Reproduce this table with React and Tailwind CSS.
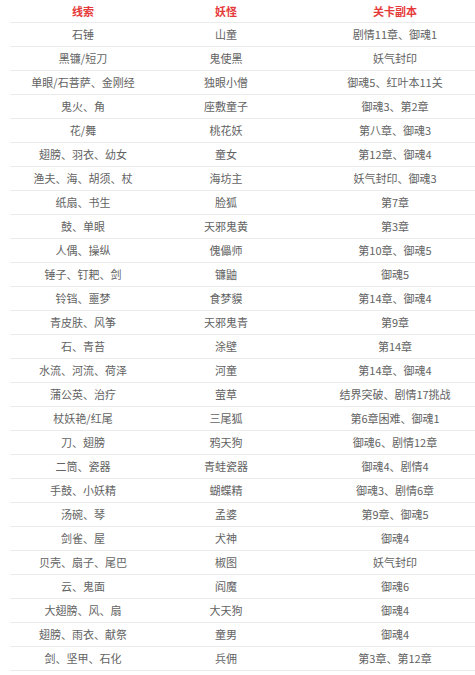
import React from "react";

const rows = [
  ["石锤", "山童", "剧情11章、御魂1"],
  ["黑镰/短刀", "鬼使黑", "妖气封印"],
  ["单眼/石菩萨、金刚经", "独眼小僧", "御魂5、红叶本11关"],
  ["鬼火、角", "座敷童子", "御魂3、第2章"],
  ["花/舞", "桃花妖", "第八章、御魂3"],
  ["翅膀、羽衣、幼女", "童女", "第12章、御魂4"],
  ["渔夫、海、胡须、杖", "海坊主", "妖气封印、御魂3"],
  ["纸扇、书生", "脸狐", "第7章"],
  ["鼓、单眼", "天邪鬼黄", "第3章"],
  ["人偶、操纵", "傀儡师", "第10章、御魂5"],
  ["锤子、钉耙、剑", "镰鼬", "御魂5"],
  ["铃铛、噩梦", "食梦貘", "第14章、御魂4"],
  ["青皮肤、风筝", "天邪鬼青", "第9章"],
  ["石、青苔", "涂壁", "第14章"],
  ["水流、河流、荷泽", "河童", "第14章、御魂4"],
  ["蒲公英、治疗", "萤草", "结界突破、剧情17挑战"],
  ["杖妖艳/红尾", "三尾狐", "第6章困难、御魂1"],
  ["刀、翅膀", "鸦天狗", "御魂6、剧情12章"],
  ["二筒、瓷器", "青蛙瓷器", "御魂4、剧情4"],
  ["手鼓、小妖精", "蝴蝶精", "御魂3、剧情6章"],
  ["汤碗、琴", "孟婆", "第9章、御魂5"],
  ["剑雀、屋", "犬神", "御魂4"],
  ["贝壳、扇子、尾巴", "椒图", "妖气封印"],
  ["云、鬼面", "阎魔", "御魂6"],
  ["大翅膀、风、扇", "大天狗", "御魂4"],
  ["翅膀、雨衣、献祭", "童男", "御魂4"],
  ["剑、坚甲、石化", "兵佣", "第3章、第12章"],
];

export default function App() {
  return (
    <div
      className="w-[475px] h-[675px] overflow-hidden bg-white pl-[10px]"
      style={{ fontFamily: '"Noto Sans CJK SC", "Noto Sans", sans-serif' }}
    >
      <div className="w-[484px] text-[11px] leading-none">
        <div className="grid grid-cols-[146px_140px_198px] h-[23px] border-b border-[#ebebeb] items-center font-semibold text-[#e53a3a]">
          <div className="text-center">线索</div>
          <div className="text-center">妖怪</div>
          <div className="text-center">关卡副本</div>
        </div>
        {rows.map((r, i) => (
          <div
            key={i}
            className="grid grid-cols-[146px_140px_198px] h-[24px] border-b border-[#ebebeb] items-center text-[#636363]"
          >
            <div className="text-center whitespace-nowrap">{r[0]}</div>
            <div className="text-center whitespace-nowrap">{r[1]}</div>
            <div className="text-center whitespace-nowrap">{r[2]}</div>
          </div>
        ))}
      </div>
    </div>
  );
}
